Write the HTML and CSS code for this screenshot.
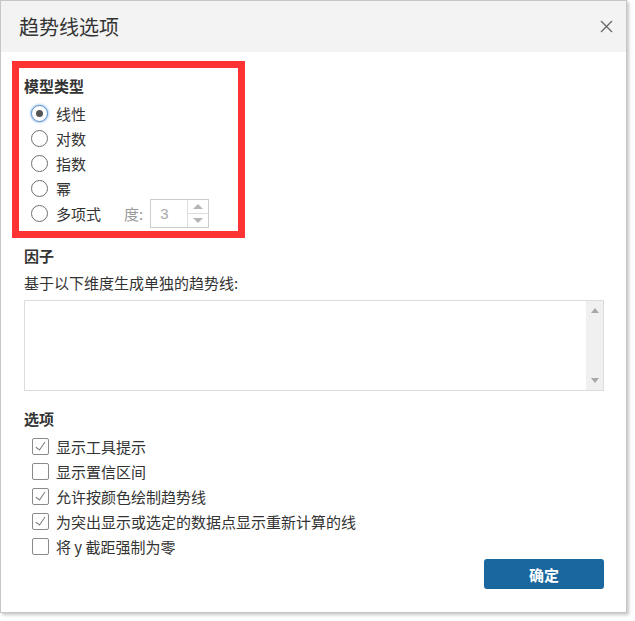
FILE: index.html
```html
<!DOCTYPE html>
<html lang="zh-CN">
<head>
<meta charset="utf-8">
<title>趋势线选项</title>
<link rel="stylesheet" href="styles.css">
</head>
<body>
<div class="page">
  <div class="dialog">
    <div class="dlg-header">
      <span class="dlg-title">趋势线选项</span>
      <svg class="close" width="13" height="13" viewBox="0 0 13 13"><path d="M1 1 L12 12 M12 1 L1 12" stroke="#666" stroke-width="1.3" fill="none"/></svg>
    </div>
    <div class="dlg-body">
      <div class="model-box">
        <div class="heading">模型类型</div>
        <div class="row"><span class="radio checked"></span><span>线性</span></div>
        <div class="row"><span class="radio"></span><span>对数</span></div>
        <div class="row"><span class="radio"></span><span>指数</span></div>
        <div class="row"><span class="radio"></span><span>幂</span></div>
        <div class="row"><span class="radio"></span><span>多项式</span>
          <span class="degree-label">度:</span>
          <span class="spinner"><span class="spin-val">3</span><span class="spin-btns"><span class="spin-up"></span><span class="spin-down"></span></span></span>
        </div>
      </div>
      <div class="heading factor-head">因子</div>
      <div class="desc">基于以下维度生成单独的趋势线:</div>
      <div class="listbox">
        <div class="list-area"></div>
        <div class="scrollbar"><span class="sb-up"></span><span class="sb-down"></span></div>
      </div>
      <div class="heading options-head">选项</div>
      <div class="checks">
        <div class="row"><span class="checkbox checked"></span><span>显示工具提示</span></div>
        <div class="row"><span class="checkbox"></span><span>显示置信区间</span></div>
        <div class="row"><span class="checkbox checked"></span><span>允许按颜色绘制趋势线</span></div>
        <div class="row"><span class="checkbox checked"></span><span>为突出显示或选定的数据点显示重新计算的线</span></div>
        <div class="row"><span class="checkbox"></span><span>将 y 截距强制为零</span></div>
      </div>
      <div class="footer"><button class="ok">确定</button></div>
    </div>
  </div>
</div>
</body>
</html>
```
FILE: styles.css
```css
html, body {
  margin: 0;
  padding: 0;
  background: #ffffff;
}
body {
  font-family: "Noto Sans CJK SC", "Noto Sans", sans-serif;
  color: #333333;
  font-size: 15px;
  width: 635px;
  height: 621px;
  overflow: hidden;
}
.page {
  width: 635px;
  height: 621px;
  background: #fff;
}
.dialog {
  width: 625px;
  height: 611px;
  border: 1px solid #c6c6c6;
  background: #fff;
  box-shadow: 2px 2px 3px rgba(0, 0, 0, 0.22);
  display: flex;
  flex-direction: column;
}
.dlg-header {
  height: 51px;
  background: #f3f3f3;
  display: flex;
  align-items: center;
  justify-content: space-between;
  padding: 0 13px 0 18px;
  flex-shrink: 0;
}
.dlg-title {
  font-size: 20px;
  color: #333;
  line-height: 24px;
  margin-top: 1px;
}
.close {
  display: block;
}
.dlg-body {
  padding: 9px 22px 0 23px;
  display: flex;
  flex-direction: column;
  flex: 1;
}
.model-box {
  margin-left: -12px;
  width: 214px;
  border: 7px solid #fe3434;
  padding: 8px 0 5px 5px;
}
.heading {
  font-weight: bold;
  line-height: 20px;
  height: 20px;
  margin-bottom: 6px;
}
.model-box .heading {
  margin-bottom: 5px;
}
.row {
  height: 25px;
  display: flex;
  align-items: center;
  line-height: 20px;
}
.radio {
  width: 15px;
  height: 15px;
  border: 1px solid #6f6f6f;
  border-radius: 50%;
  margin-left: 7px;
  margin-right: 8px;
  flex-shrink: 0;
  display: flex;
  align-items: center;
  justify-content: center;
  background: #fff;
}
.radio.checked {
  border-color: #5b8fc7;
  box-shadow: 0 0 2px 1px rgba(80, 150, 230, 0.45);
}
.radio.checked::after {
  content: "";
  width: 7px;
  height: 7px;
  border-radius: 50%;
  background: #555;
}
.degree-label {
  color: #9a9a9a;
  margin-left: 23px;
  margin-right: 7px;
}
.spinner {
  width: 57px;
  height: 27px;
  border: 1px solid #cccccc;
  display: flex;
  margin: -2px 0;
  background: #fff;
}
.spin-val {
  flex: 1;
  color: #a8a8a8;
  padding-left: 9px;
  line-height: 27px;
  font-family: "Liberation Sans", sans-serif;
  font-size: 15px;
}
.spin-btns {
  width: 20px;
  border-left: 1px solid #dddddd;
  display: flex;
  flex-direction: column;
}
.spin-up, .spin-down {
  flex: 1;
  display: flex;
  align-items: center;
  justify-content: center;
}
.spin-up {
  border-bottom: 1px solid #dddddd;
}
.spin-up::after {
  content: "";
  border-left: 5px solid transparent;
  border-right: 5px solid transparent;
  border-bottom: 5px solid #b5b5b5;
}
.spin-down::after {
  content: "";
  border-left: 5px solid transparent;
  border-right: 5px solid transparent;
  border-top: 5px solid #b5b5b5;
}
.factor-head {
  margin-top: 8px;
  margin-bottom: 7px;
}
.desc {
  line-height: 20px;
  height: 20px;
}
.listbox {
  margin-top: 7px;
  height: 89px;
  border: 1px solid #dcdcdc;
  display: flex;
}
.list-area {
  flex: 1;
}
.scrollbar {
  width: 17px;
  background: #f0f0f0;
  display: flex;
  flex-direction: column;
  justify-content: space-between;
  align-items: center;
  padding: 7px 0 7px;
}
.sb-up {
  border-left: 4px solid transparent;
  border-right: 4px solid transparent;
  border-bottom: 5px solid #a8a8a8;
}
.sb-down {
  border-left: 4px solid transparent;
  border-right: 4px solid transparent;
  border-top: 5px solid #a8a8a8;
}
.options-head {
  margin-top: 18px;
  margin-bottom: 5px;
}
.checks .row {
  height: 25px;
}
.checkbox {
  width: 15px;
  height: 15px;
  border: 1px solid #8a8a8a;
  border-radius: 2px;
  margin-left: 8px;
  margin-right: 7px;
  flex-shrink: 0;
  position: relative;
  background: #fff;
}
.checkbox.checked::after {
  content: "";
  position: absolute;
  left: 5px;
  top: 1px;
  width: 4px;
  height: 9px;
  border-right: 1.5px solid #7a7a7a;
  border-bottom: 1.5px solid #7a7a7a;
  transform: rotate(35deg);
}
.footer {
  display: flex;
  justify-content: flex-end;
}
.ok {
  width: 120px;
  height: 30px;
  border: none;
  border-radius: 3px;
  background: #19679c;
  color: #fff;
  font-family: "Noto Sans CJK SC", sans-serif;
  font-size: 15px;
  font-weight: bold;
  padding: 0;
}
```
